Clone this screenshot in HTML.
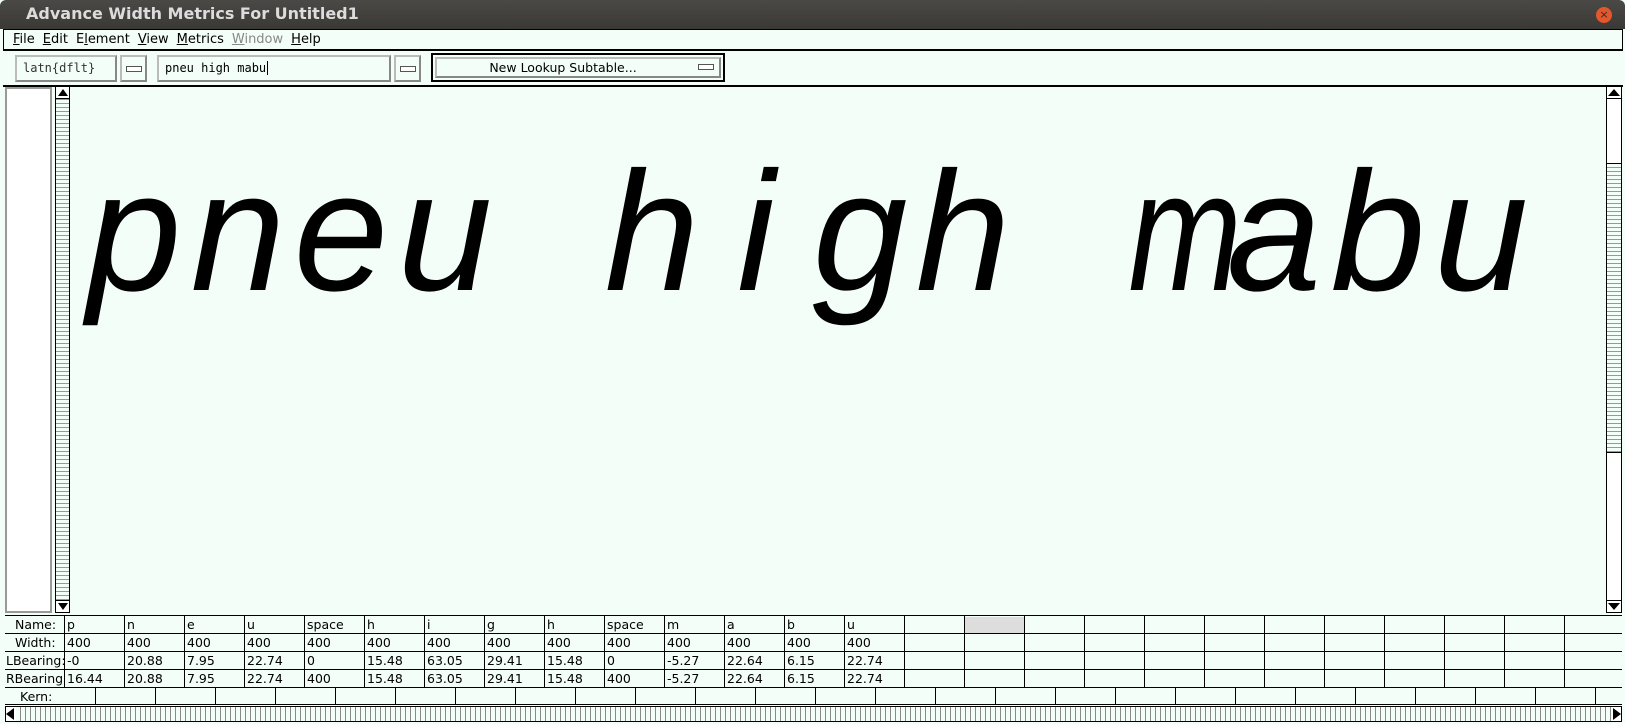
<!DOCTYPE html>
<html><head><meta charset="utf-8"><style>
*{margin:0;padding:0;box-sizing:border-box}
body{width:1625px;height:724px;overflow:hidden;background:#f3fef9;font-family:"DejaVu Sans","Liberation Sans",sans-serif;position:relative}
.abs{position:absolute}
#title{left:0;top:0;width:1625px;height:29px;background:linear-gradient(#4a4946,#3a3935);color:#dcdcdc;font-weight:bold;font-size:16px;line-height:28px;padding-left:26px;border-radius:6px 6px 0 0}
#close{left:1596px;top:7px;width:16px;height:16px;border-radius:50%;background:#e3572c;color:#3a2a20;font-size:11px;line-height:16px;text-align:center}
#menu{left:3px;top:29px;width:1620px;height:22px;border:1px solid #000;border-bottom:2px solid #000;font-size:13px;line-height:20px;padding-left:9px;color:#000;background:#f3fef9}
#menu span{margin-right:8px}
.box{border:2px solid #bbb;border-right-color:#888;border-bottom-color:#888;background:#f3fef9}
.mono{font-family:"DejaVu Sans Mono","Liberation Mono",monospace;font-size:12px;color:#333;line-height:22px;padding-left:6px}
.btnline{position:absolute;width:16px;height:6px;border:1px solid #555;background:#fff}
#canvas{left:3px;top:85px;width:1620px;height:529px;border-top:2px solid #000;background:#f3fef9}
.vs{background:repeating-linear-gradient(#f3fef9 0 3px,#999 3px 4px);border:1px solid #000}
.row{position:absolute;left:5px;width:1617px;height:18px;border-top:1.5px solid #000;font-size:12.5px;line-height:17px;color:#000}
.row span{position:absolute;top:0}
.grid{background:repeating-linear-gradient(90deg,transparent 0 59px,#000 59px 60px)}
.glyph{position:absolute;top:147px;font-family:"Liberation Sans",sans-serif;font-style:italic;font-size:170px;line-height:170px;color:#000;width:104px;text-align:center}
</style></head><body>
<div id="title" class="abs">Advance Width Metrics For Untitled1</div>
<div id="close" class="abs">×</div>
<div id="menu" class="abs"><span><u>F</u>ile</span><span><u>E</u>dit</span><span>E<u>l</u>ement</span><span><u>V</u>iew</span><span><u>M</u>etrics</span><span style="color:#888"><u>W</u>indow</span><span><u>H</u>elp</span></div>
<div class="abs box mono" style="left:15px;top:55px;width:102px;height:27px">latn{dflt}</div>
<div class="abs box" style="left:120px;top:55px;width:27px;height:27px"><div class="btnline" style="left:4px;top:9px"></div></div>
<div class="abs box mono" style="left:157px;top:55px;width:234px;height:27px;color:#000">pneu high mabu<span style="border-left:1px solid #000;margin-left:1px"></span></div>
<div class="abs box" style="left:394px;top:55px;width:27px;height:27px"><div class="btnline" style="left:4px;top:9px"></div></div>
<div class="abs" style="left:431px;top:53px;width:294px;height:29px;border:2px solid #000;background:#f3fef9"><div class="box" style="position:absolute;left:2px;top:2px;width:286px;height:21px;font-size:12.5px;text-align:center;line-height:17px;padding-right:30px">New Lookup Subtable...</div><div class="btnline" style="left:265px;top:9px"></div></div>
<div id="canvas" class="abs"></div>
<div class="abs box" style="left:5px;top:87px;width:47px;height:526px;background:#fff;border-color:#999"></div>
<div class="abs vs" style="left:55px;top:87px;width:15px;height:526px"></div>
<div class="abs" style="left:56px;top:87px;width:13px;height:12px;background:#fff;border-bottom:1px solid #000"><div style="margin:2px auto;width:0;height:0;border-left:5px solid transparent;border-right:5px solid transparent;border-bottom:7px solid #000"></div></div>
<div class="abs" style="left:56px;top:600px;width:13px;height:12px;background:#fff;border-top:1px solid #000"><div style="margin:2px auto;width:0;height:0;border-left:5px solid transparent;border-right:5px solid transparent;border-top:7px solid #000"></div></div>
<div class="abs" style="left:1606px;top:87px;width:16px;height:526px;background:#fff;border:1px solid #000"></div>
<div class="abs vs" style="left:1606px;top:163px;width:16px;height:290px"></div>
<div class="abs" style="left:1607px;top:87px;width:14px;height:12px;background:#fff;border-bottom:1px solid #000"><div style="margin:2px auto;width:0;height:0;border-left:6px solid transparent;border-right:6px solid transparent;border-bottom:7px solid #000"></div></div>
<div class="abs" style="left:1607px;top:600px;width:14px;height:12px;background:#fff;border-top:1px solid #000"><div style="margin:2px auto;width:0;height:0;border-left:6px solid transparent;border-right:6px solid transparent;border-top:7px solid #000"></div></div>

<div class="glyph" style="left:82px">p</div><div class="glyph" style="left:186px">n</div><div class="glyph" style="left:289px">e</div><div class="glyph" style="left:393px">u</div>
<div class="glyph" style="left:600px">h</div><div class="glyph" style="left:704px">i</div><div class="glyph" style="left:808px">g</div><div class="glyph" style="left:911px">h</div>
<div class="glyph" style="left:1118px;transform:scaleX(0.8)">m</div><div class="glyph" style="left:1222px">a</div><div class="glyph" style="left:1326px">b</div><div class="glyph" style="left:1429px">u</div>

<div class="row grid" style="top:615px"><span style="left:10px">Name:</span><span style="left:62px">p</span><span style="left:122px">n</span><span style="left:182px">e</span><span style="left:242px">u</span><span style="left:302px">space</span><span style="left:362px">h</span><span style="left:422px">i</span><span style="left:482px">g</span><span style="left:542px">h</span><span style="left:602px">space</span><span style="left:662px">m</span><span style="left:722px">a</span><span style="left:782px">b</span><span style="left:842px">u</span><span style="left:960px;width:59px;height:16px;top:1px;background:#ddd"></span></div>
<div class="row grid" style="top:633px"><span style="left:10px">Width:</span><span style="left:62px">400</span><span style="left:122px">400</span><span style="left:182px">400</span><span style="left:242px">400</span><span style="left:302px">400</span><span style="left:362px">400</span><span style="left:422px">400</span><span style="left:482px">400</span><span style="left:542px">400</span><span style="left:602px">400</span><span style="left:662px">400</span><span style="left:722px">400</span><span style="left:782px">400</span><span style="left:842px">400</span></div>
<div class="row grid" style="top:651px"><span style="left:1px">LBearing:</span><span style="left:62px">-0</span><span style="left:122px">20.88</span><span style="left:182px">7.95</span><span style="left:242px">22.74</span><span style="left:302px">0</span><span style="left:362px">15.48</span><span style="left:422px">63.05</span><span style="left:482px">29.41</span><span style="left:542px">15.48</span><span style="left:602px">0</span><span style="left:662px">-5.27</span><span style="left:722px">22.64</span><span style="left:782px">6.15</span><span style="left:842px">22.74</span></div>
<div class="row grid" style="top:669px"><span style="left:1px">RBearing</span><span style="left:62px">16.44</span><span style="left:122px">20.88</span><span style="left:182px">7.95</span><span style="left:242px">22.74</span><span style="left:302px">400</span><span style="left:362px">15.48</span><span style="left:422px">63.05</span><span style="left:482px">29.41</span><span style="left:542px">15.48</span><span style="left:602px">400</span><span style="left:662px">-5.27</span><span style="left:722px">22.64</span><span style="left:782px">6.15</span><span style="left:842px">22.74</span></div>
<div class="row grid" style="top:687px;background-position:31px 0;border-bottom:1.5px solid #000"><span style="left:15px">Kern:</span></div>
<div class="abs" style="left:5px;top:706px;width:1617px;height:16px;border:1px solid #000;background:repeating-linear-gradient(90deg,#f3fef9 0 4px,#888 4px 5px)"></div>
<div class="abs" style="left:6px;top:707px;width:10px;height:14px;background:#fff"><div style="margin:1px 0;width:0;height:0;border-top:6px solid transparent;border-bottom:6px solid transparent;border-right:8px solid #000"></div></div>
<div class="abs" style="left:1611px;top:707px;width:10px;height:14px;background:#fff"><div style="margin:1px 0 0 2px;width:0;height:0;border-top:6px solid transparent;border-bottom:6px solid transparent;border-left:8px solid #000"></div></div>
</body></html>
